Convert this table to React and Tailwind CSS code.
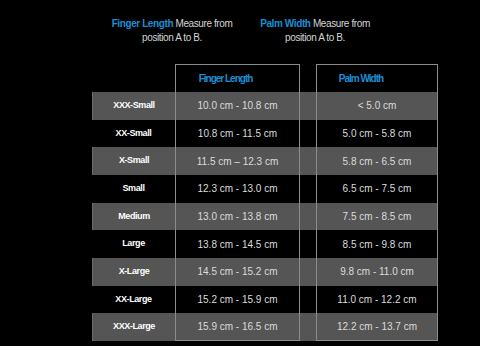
const SIZES = [
  { label: 'XXX-Small', finger: '10.0 cm - 10.8 cm', palm: '< 5.0 cm' },
  { label: 'XX-Small', finger: '10.8 cm - 11.5 cm', palm: '5.0 cm - 5.8 cm' },
  { label: 'X-Small', finger: '11.5 cm – 12.3 cm', palm: '5.8 cm - 6.5 cm' },
  { label: 'Small', finger: '12.3 cm - 13.0 cm', palm: '6.5 cm - 7.5 cm' },
  { label: 'Medium', finger: '13.0 cm - 13.8 cm', palm: '7.5 cm - 8.5 cm' },
  { label: 'Large', finger: '13.8 cm - 14.5 cm', palm: '8.5 cm - 9.8 cm' },
  { label: 'X-Large', finger: '14.5 cm - 15.2 cm', palm: '9.8 cm - 11.0 cm' },
  { label: 'XX-Large', finger: '15.2 cm - 15.9 cm', palm: '11.0 cm - 12.2 cm' },
  { label: 'XXX-Large', finger: '15.9 cm - 16.5 cm', palm: '12.2 cm - 13.7 cm' },
]

function Note({ title }) {
  return (
    <div className="w-[140px] text-[10px] leading-[14px] tracking-[-0.4px] text-[#d4d4d4] text-center">
      <span className="font-bold text-[#1b8fd2]">{title}</span> Measure from
      <br />
      position A to B.
    </div>
  )
}

export default function App() {
  return (
    <div className="w-[480px] h-[346px] bg-black overflow-hidden font-['Liberation_Sans',Arial,sans-serif]">
      {/* Notes */}
      <div className="flex gap-[3px] pl-[102px] pt-[17px] h-[64px]">
        <Note title="Finger Length" />
        <Note title="Palm Width" />
      </div>

      {/* Size chart */}
      <div className="ml-[92px] w-[346px]">
        <div className="grid grid-cols-[83px_125px_16px_122px] h-[28px]">
          <div />
          <div className="border border-b-0 border-[#8c8c8c] flex items-center justify-center pr-6 font-bold text-[10px] tracking-[-1px] text-[#1b8fd2]">
            Finger Length
          </div>
          <div />
          <div className="border border-b-0 border-[#8c8c8c] flex items-center justify-center pr-8 font-bold text-[10px] tracking-[-1px] text-[#1b8fd2]">
            Palm Width
          </div>
        </div>
        {SIZES.map((row, i) => {
          const last = i === SIZES.length - 1
          return (
            <div
              key={row.label}
              className={`grid grid-cols-[83px_125px_16px_122px] h-[27.67px] ${i % 2 === 0 ? 'bg-[#555555]' : 'bg-black'}`}
            >
              <div className={`flex items-center justify-center text-[9px] tracking-[-0.4px] font-bold text-white ${i % 2 === 0 ? 'border-l border-[#6a6a6a]' : ''}`}>
                {row.label}
              </div>
              <div className={`flex items-center justify-center border-x border-[#8c8c8c] text-[10px] text-[#dcdcdc] ${last ? 'border-b' : ''}`}>
                {row.finger}
              </div>
              <div />
              <div className={`flex items-center justify-center border-x border-[#8c8c8c] text-[10px] text-[#dcdcdc] ${last ? 'border-b' : ''}`}>
                {row.palm}
              </div>
            </div>
          )
        })}
      </div>
    </div>
  )
}
